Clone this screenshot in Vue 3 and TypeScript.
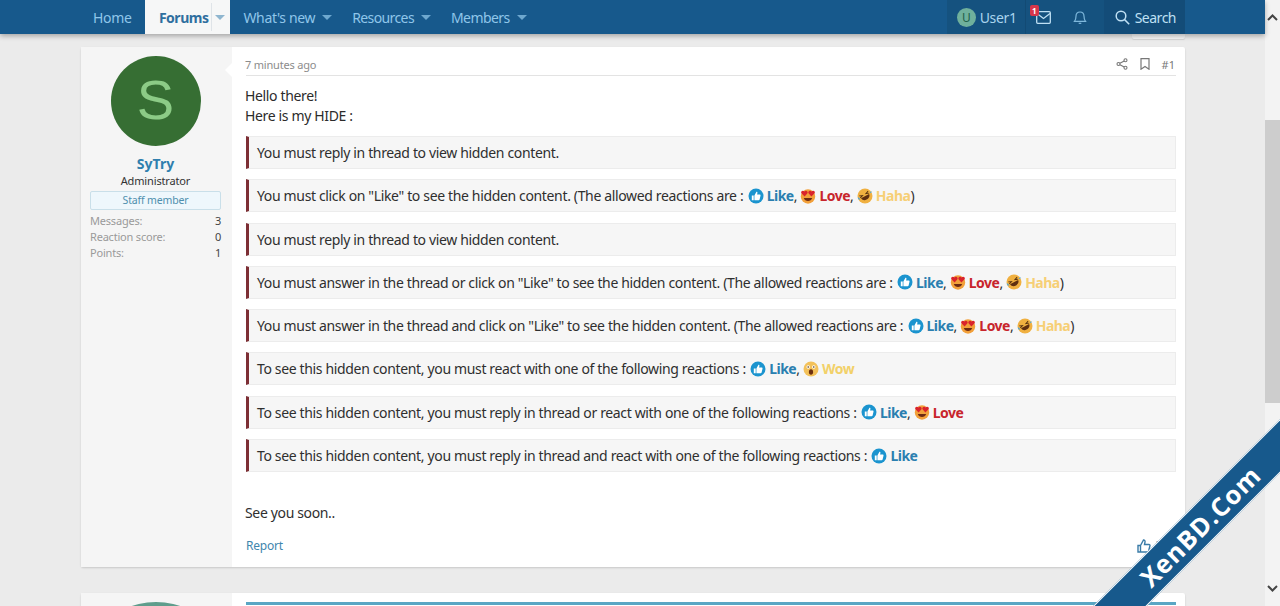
<script setup lang="ts">
type Reaction = 'like' | 'love' | 'haha' | 'wow'
interface Block { text: string; reactions: Reaction[]; paren: boolean }

const labels: Record<Reaction, string> = { like: 'Like', love: 'Love', haha: 'Haha', wow: 'Wow' }
const allowed = ' (The allowed reactions are :'

const blocks: Block[] = [
  { text: 'You must reply in thread to view hidden content.', reactions: [], paren: false },
  { text: 'You must click on "Like" to see the hidden content.' + allowed, reactions: ['like', 'love', 'haha'], paren: true },
  { text: 'You must reply in thread to view hidden content.', reactions: [], paren: false },
  { text: 'You must answer in the thread or click on "Like" to see the hidden content.' + allowed, reactions: ['like', 'love', 'haha'], paren: true },
  { text: 'You must answer in the thread and click on "Like" to see the hidden content.' + allowed, reactions: ['like', 'love', 'haha'], paren: true },
  { text: 'To see this hidden content, you must react with one of the following reactions :', reactions: ['like', 'wow'], paren: false },
  { text: 'To see this hidden content, you must reply in thread or react with one of the following reactions :', reactions: ['like', 'love'], paren: false },
  { text: 'To see this hidden content, you must reply in thread and react with one of the following reactions :', reactions: ['like'], paren: false }
]
const stats = [
  { k: 'Messages:', v: '3' },
  { k: 'Reaction score:', v: '0' },
  { k: 'Points:', v: '1' }
]
</script>

<template>
  <div class="page">
    <svg class="defs" width="0" height="0" aria-hidden="true">
      <symbol id="r-like" viewBox="0 0 16 16">
        <circle cx="8" cy="8" r="7.5" fill="#1b94cf" />
        <path d="M3.8 7.6h1.900v4.700H3.800zM6.400 7.400l1.900-3.500c.8-.2 1.300.4 1.100 1.200L9.100 6.600h2.600c.7 0 1 .6.8 1.200l-.9 3.700c-.1.500-.5.8-1 .8H6.400z" fill="#fff" />
      </symbol>
      <symbol id="r-love" viewBox="0 0 16 16">
        <circle cx="8" cy="8.500" r="7.200" fill="#f2a03a" />
        <path d="M3.800 10c1 4 7.400 4 8.400 0z" fill="#6d2a12" />
        <path d="M4.600 8.400 1.400 5.300C.3 3.600 2.700 1.500 4.400 3.400 6 1.500 8.400 3.500 7.500 5.300zM11.400 8.400 8.500 5.300C7.600 3.500 10 1.500 11.600 3.400c1.700-1.900 4.100.2 3 1.900z" fill="#d9232c" />
      </symbol>
      <symbol id="r-haha" viewBox="0 0 16 16">
        <circle cx="8" cy="8" r="7.500" fill="#f0b040" />
        <g transform="rotate(-28 8 8)">
          <path d="M3.400 8.200c.4 5 8.800 5 9.200 0z" fill="#5f2f10" />
          <path d="M3 5.200 6 6.400 3 7.400M13 5.200 10 6.400 13 7.400" fill="none" stroke="#5a3410" stroke-width="1" />
        </g>
        <path d="M.8 9.300c1.100.2 2.200 1.100 2.200 2.500-1.100.3-2.200-.9-2.200-2.500zM15 3.500c-.3 1-1.300 1.700-2.300 1.500.2-1.100 1.300-1.800 2.300-1.500z" fill="#4aa8e0" />
      </symbol>
      <symbol id="r-wow" viewBox="0 0 16 16">
        <circle cx="8" cy="8" r="7.500" fill="#f3c15a" />
        <circle cx="5.200" cy="6" r="1.700" fill="#fff" />
        <circle cx="10.800" cy="6" r="1.700" fill="#fff" />
        <circle cx="5.200" cy="6" r=".8" fill="#4a2c10" />
        <circle cx="10.800" cy="6" r=".8" fill="#4a2c10" />
        <ellipse cx="8" cy="11" rx="2.100" ry="2.800" fill="#6d3010" />
      </symbol>
    </svg>

    <div class="viewport">
      <header class="nav">
        <nav class="tabs">
          <a class="tab">Home</a>
          <a class="tab active">Forums<span class="split"><i class="caret"></i></span></a>
          <a class="tab drop">What's new<i class="caret"></i></a>
          <a class="tab drop tight">Resources<i class="caret"></i></a>
          <a class="tab drop tight">Members<i class="caret"></i></a>
        </nav>
        <div class="tools">
          <a class="tool user"><span class="mini">U</span>User1</a>
          <a class="tool icon inbox">
            <span class="badge">1</span>
            <svg width="15" height="13" viewBox="0 0 15 13" fill="none" stroke="#bfe0f4" stroke-width="1.300"><rect x=".7" y=".7" width="13.600" height="11.600" rx="1" /><path d="m1 2.500 6.500 5 6.500-5" /></svg>
          </a>
          <a class="tool icon">
            <svg width="14" height="16" viewBox="0 0 14 16" fill="none" stroke="#7fb8dc" stroke-width="1.200"><path d="M1.500 12.300c1.200-1.400 1.500-2.600 1.500-5 0-2.500 1.700-4.300 4-4.300s4 1.800 4 4.300c0 2.400.3 3.600 1.500 5z" /><path d="M5.700 14.300h2.600" /></svg>
          </a>
          <a class="tool search">
            <svg width="15" height="15" viewBox="0 0 15 15" fill="none" stroke="#bfe0f4" stroke-width="1.500"><circle cx="6" cy="6" r="4.800" /><path d="m9.600 9.600 4.600 4.600" /></svg>
            Search
          </a>
        </div>
      </header>

      <main class="content">
        <div class="peek"></div>
        <article class="card">
          <aside class="cell">
            <div class="avatar">S</div>
            <a class="name">SyTry</a>
            <div class="role">Administrator</div>
            <div class="staff">Staff member</div>
            <dl class="stats">
              <div v-for="s in stats" :key="s.k" class="stat"><dt>{{ s.k }}</dt><dd>{{ s.v }}</dd></div>
            </dl>
          </aside>
          <section class="main">
            <div class="head">
              <span class="time">7 minutes ago</span>
              <div class="head-right">
                <svg width="12" height="12" viewBox="0 0 12 12" fill="none" stroke="#777" stroke-width="1.100"><circle cx="9.500" cy="2.200" r="1.500" /><circle cx="2.500" cy="6" r="1.500" /><circle cx="9.500" cy="9.800" r="1.500" /><path d="m3.900 5.300 4.300-2.400M3.900 6.700l4.300 2.400" /></svg>
                <svg width="10" height="12" viewBox="0 0 10 12" fill="none" stroke="#777" stroke-width="1.200"><path d="M1 .7h8v10.500L5 8.500l-4 2.700z" /></svg>
                <span class="num">#1</span>
              </div>
            </div>
            <div class="body">
              <p class="intro">Hello there!<br />Here is my HIDE :</p>
              <div v-for="(b, i) in blocks" :key="i" class="hide">
                <span>{{ b.text }}&nbsp;</span>
                <template v-for="(r, j) in b.reactions" :key="r">
                  <svg class="emoji" :class="{ first: j === 0 }"><use :href="'#r-' + r" /></svg>
                  <b :class="r">{{ labels[r] }}</b><span v-if="j < b.reactions.length - 1">,&nbsp;</span>
                </template>
                <span v-if="b.paren">)</span>
              </div>
              <p class="outro">See you soon..</p>
            </div>
            <div class="foot">
              <a class="report">Report</a>
              <a class="like-btn">
                <svg width="14" height="14" viewBox="0 0 14 14" fill="none" stroke="#3a7ca8" stroke-width="1.400"><path d="M1 6.500h2.500v6.500H1zM3.500 6.500l3-5.500c1.200 0 1.800.8 1.500 2L7.500 5.500h4.400c.8 0 1.300.7 1 1.500l-1.300 5c-.2.600-.6 1-1.300 1H3.500z" /></svg>
                Like
              </a>
            </div>
          </section>
        </article>

        <article class="card next">
          <aside class="cell"><div class="avatar teal"></div></aside>
          <section class="main"><div class="bar"></div></section>
        </article>
      </main>
    </div>

    <div class="scrollbar">
      <svg width="11" height="7" viewBox="0 0 11 7" fill="none" stroke="#444" stroke-width="2"><path d="m1 6 4.500-4.500L10 6" /></svg>
      <div class="track"><div class="thumb-bar"></div></div>
      <svg width="11" height="7" viewBox="0 0 11 7" fill="none" stroke="#444" stroke-width="2"><path d="m1 1 4.500 4.500L10 1" /></svg>
    </div>

    <div class="ribbon"><span>XenBD.Com</span></div>
  </div>
</template>

<style>
html, body { margin: 0; overflow: hidden; }
</style>

<style scoped>
.page {
  position: relative;
  display: flex;
  width: 1280px;
  height: 606px;
  overflow: hidden;
  background: #ebebeb;
  font-family: "Noto Sans", "Open Sans", sans-serif;
  font-size: 14px;
  color: #2f2f2f;
}
.defs { position: absolute; }
.viewport { flex: 1; min-width: 0; display: flex; flex-direction: column; }
.nav {
  height: 34px;
  flex: none;
  display: flex;
  justify-content: space-between;
  padding: 0 80px 0 81px;
  background: #17598c;
  box-shadow: 0 2px 5px rgba(0, 0, 0, .3);
  position: relative;
  z-index: 2;
}
.tabs, .tools { display: flex; }
.tab {
  display: flex;
  align-items: center;
  padding: 0 14px 0 12px;
  color: #8fc6ea;
  letter-spacing: -.35px;
  height: 34px;
}
.tab.drop { padding: 0 7px 0 13px; gap: 7px; }
.tab.tight { letter-spacing: -.6px; }
.tab.active {
  background: #f6f7f7;
  color: #2f6f9f;
  font-weight: 700;
  padding: 0 0 0 13.500px;
  width: 71.500px;
  box-sizing: content-box;
  letter-spacing: -.5px;
}
.split { display: flex; align-items: center; height: 28px; border-left: 1px solid #dfe4e8; margin-left: 3px; padding-left: 3px; }
.caret { width: 0; height: 0; border: 5px solid transparent; border-top: 5px solid #6ea8cf; border-bottom: 0; }
.active .caret { border-top-color: #8fb6cf; }
.tools { background: #15527f; }
.tool {
  display: flex;
  align-items: center;
  color: #a9d4ee;
  letter-spacing: -.35px;
}
.user { width: 79px; padding-left: 10px; box-sizing: border-box; gap: 4px; border-right: 1px solid #124a74; }
.mini {
  width: 19px; height: 19px; border-radius: 50%;
  background: #6fb09c; color: #1f5f4a;
  font-size: 12px; display: flex; align-items: center; justify-content: center;
}
.icon { position: relative; width: 37px; justify-content: center; }
.inbox { width: 36px; }
.badge {
  position: absolute; left: 4px; top: 5px;
  width: 9px; height: 11px; background: #d7364a; color: #fff;
  font-size: 8px; font-weight: 700; line-height: 11px; text-align: center; border-radius: 2px;
  letter-spacing: 0;
}
.search { margin-left: 5px; padding: 0 9px 0 11px; gap: 5px; background: #134c78; color: #bfe0f4; letter-spacing: -.5px; }

.content { flex: 1; display: flex; flex-direction: column; padding: 13px 80px 0 81px; gap: 26px; position: relative; }
.peek {
  position: absolute; left: 1132px; top: 0;
  width: 53px; height: 5px;
  background: #f6f6f6;
  border-radius: 0 0 2px 2px;
  box-shadow: 0 1px 1px rgba(0, 0, 0, .1);
}
.card {
  flex: none;
  display: flex;
  height: 520px;
  width: 1104px;
  background: #fff;
  border-radius: 2px;
  box-shadow: 0 1px 2px rgba(0, 0, 0, .15);
}
.card.next { height: 60px; }
.cell {
  width: 151px; flex: none;
  background: #f5f5f5;
  padding: 9px 11px 0 9px;
  box-sizing: border-box;
  display: flex; flex-direction: column; align-items: center;
}
.avatar {
  width: 90px; height: 90px; border-radius: 50%;
  background: #366e33; color: #8ccb86;
  font-family: "Liberation Sans", sans-serif;
  font-size: 56px; line-height: 88px; text-align: center;
}
.avatar.teal { background: #5f9d8c; }
.name { margin-top: 9px; color: #2f7fae; font-weight: 700; line-height: 18px; }
.role { font-size: 11px; line-height: 16px; color: #333; letter-spacing: -.15px; }
.staff {
  margin-top: 2px;
  width: 131px; height: 19px; box-sizing: border-box;
  border: 1px solid #c9dfe9; border-radius: 2px;
  background: #eef7fc; color: #4f8fae;
  font-size: 10.500px; line-height: 17px; text-align: center;
  letter-spacing: -.15px;
}
.stats { margin: 3px 0 0; width: 131px; font-size: 11px; line-height: 16px; color: #9a9a9a; letter-spacing: -.2px; }
.stat { display: flex; justify-content: space-between; }
.stat dd { margin: 0; color: #444; }
.main { flex: 1; min-width: 0; padding: 0 9px 0 14px; display: flex; flex-direction: column; position: relative; }
.main::before {
  content: ""; position: absolute; left: -7px; top: 16px;
  border: 7px solid transparent; border-left: 0; border-right-color: #fff;
}
.head {
  height: 29px; box-sizing: border-box; padding-top: 6px;
  display: flex; justify-content: space-between; align-items: center;
  border-bottom: 1px solid #e3e3e3;
  color: #8c8c8c; font-size: 11px;
}
.time { margin-left: -1px; letter-spacing: -.2px; }
.head-right { display: flex; align-items: center; gap: 12px; padding-right: 1px; color: #777; }
.body { flex: 1; }
.intro { margin: 0 0 10px -1px; padding-top: 10px; line-height: 20px; letter-spacing: -.35px; color: #2b2b2b; }
.hide {
  height: 33px; box-sizing: border-box;
  display: flex; align-items: center;
  margin-bottom: 10.300px;
  padding-left: 8px;
  background: #f6f6f6;
  border: 1px solid #ececec;
  border-left: 3px solid #7d2f35;
  letter-spacing: -.35px;
  white-space: pre;
}
.emoji { width: 16px; height: 16px; margin-right: 3px; flex: none; }
.emoji.first { margin-left: 1px; }
.hide b { font-weight: 700; letter-spacing: -.5px; }
.like { color: #2a7fb0; }
.love { color: #c8252c; }
.haha { color: #f6cf75; }
.wow { color: #f2d169; }
.outro { margin: 31px 0 0 -1px; line-height: 20px; letter-spacing: -.35px; }
.foot { height: 36px; display: flex; justify-content: space-between; align-items: center; padding-bottom: 7px; box-sizing: border-box; }
.report { color: #3f86ad; font-size: 12px; letter-spacing: -.2px; }
.like-btn { display: flex; align-items: center; gap: 4px; color: #3a7ca8; font-size: 12px; margin-right: -2px; }
.bar { height: 3px; margin-top: 9px; background: #5aa6c4; }
.scrollbar {
  width: 15px; flex: none; background: #f3f3f3;
  display: flex; flex-direction: column; align-items: center; justify-content: space-between;
  padding: 14px 0 14px; box-sizing: border-box;
  position: relative; z-index: 1;
}
.track { flex: 1; width: 100%; position: relative; }
.thumb-bar { position: absolute; top: 99px; height: 283px; width: 100%; background: #cdcdcd; }
.ribbon {
  position: absolute; left: 1050px; top: 507px;
  width: 300px; height: 38px; box-sizing: border-box;
  transform: rotate(-45deg);
  background: #17598c;
  border-top: 1.500px solid #fff; border-bottom: 1.500px solid #fff;
  color: #fff; font-family: "Open Sans", sans-serif; font-weight: 700; font-size: 25.500px;
  display: flex; align-items: center; justify-content: center;
  letter-spacing: 1px;
  z-index: 3;
}
</style>
